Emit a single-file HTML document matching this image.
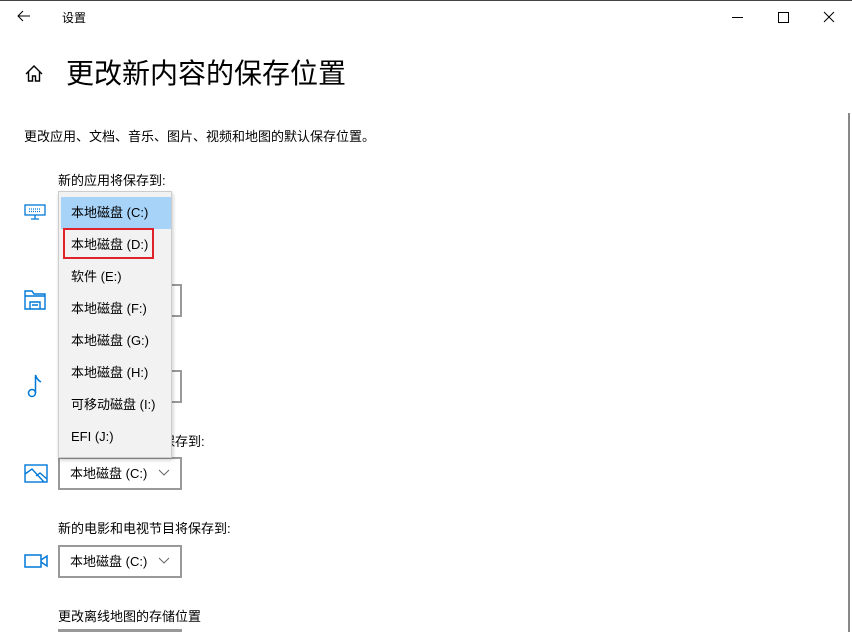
<!DOCTYPE html>
<html><head><meta charset="utf-8"><style>
body{margin:0;width:852px;height:632px;overflow:hidden;background:#fff;font-family:"Liberation Sans","Noto Sans CJK SC",sans-serif;color:#000;position:relative}
.a{position:absolute;white-space:nowrap}
.cb{position:absolute;left:58px;width:120px;height:29px;border:2px solid #999;background:#fff;font-size:13px;line-height:29px;box-sizing:content-box}
.cb span{position:absolute;left:10px}
.cb svg{position:absolute;left:98px;top:10px}
.pop{position:absolute;left:58px;top:191px;width:112px;height:265px;background:#f2f2f2;border:1px solid #ccc;box-shadow:1px 2px 4px rgba(0,0,0,.2)}
.it{position:absolute;left:2px;width:110px;height:32px;line-height:32px;font-size:13px;padding-left:10px;box-sizing:border-box}
</style></head><body>
<div class="a" style="left:0;top:0;width:852px;height:1px;background:#444"></div>
<svg class="a" style="left:17px;top:10px" width="14" height="12"><path d="M6 1L1 6L6 11M1 6H13" stroke="#000" fill="none" stroke-width="1"/></svg>
<div class="a" style="left:62px;top:9px;font-size:12px">设置</div>
<div class="a" style="left:732px;top:17px;width:11px;height:1px;background:#000"></div>
<div class="a" style="left:778px;top:12px;width:9px;height:9px;border:1px solid #000"></div>
<svg class="a" style="left:823px;top:11px" width="12" height="12"><path d="M1 1L11 11M11 1L1 11" stroke="#000"/></svg>
<svg class="a" style="left:24px;top:64px" width="20" height="20"><path d="M2 10L10 2L18 10M4.5 8V17H8.5V12H11.5V17H15.5V8" stroke="#000" fill="none" stroke-width="1.4"/></svg>
<div class="a" style="left:66px;top:55px;font-size:28px;line-height:38px">更改新内容的保存位置</div>
<div class="a" style="left:24px;top:126px;font-size:13px">更改应用、文档、音乐、图片、视频和地图的默认保存位置。</div>
<div class="a" style="left:58px;top:170px;font-size:13px">新的应用将保存到:</div>
<div class="a" style="left:58px;top:257px;font-size:13px">新的文档将保存到:</div>
<div class="a" style="left:58px;top:344px;font-size:13px">新的音乐将保存到:</div>
<div class="a" style="left:58px;top:431px;font-size:13px">新的照片和视频将保存到:</div>
<div class="a" style="left:58px;top:518px;font-size:13px">新的电影和电视节目将保存到:</div>
<div class="a" style="left:58px;top:606px;font-size:13px">更改离线地图的存储位置</div>
<div class="a" style="left:58px;top:629px;width:124px;height:3px;background:#999"></div>
<div class="a" style="left:848px;top:113px;width:2px;height:519px;background:#888"></div>
<!-- icons -->
<svg class="a" style="left:24px;top:204px" width="22" height="16" fill="none" stroke="#0078d7" stroke-width="1.3"><rect x="1" y="1" width="20" height="10"/><path d="M11 11V15M7 15H15"/><path d="M5 5h12M5 7.5h12" stroke-dasharray="1 1"/></svg>
<svg class="a" style="left:24px;top:289px" width="22" height="21" fill="none" stroke="#0078d7" stroke-width="1.4"><path d="M1 20V2H8L10 5H21V20Z M1 7H21 M6 20V13H16V20 M8 16H14"/></svg>
<svg class="a" style="left:27px;top:373px" width="16" height="26" fill="none" stroke="#0078d7" stroke-width="1.5"><circle cx="5" cy="20" r="3.5"/><path d="M8.5 20V2Q10 7 14 9"/></svg>
<svg class="a" style="left:24px;top:464px" width="24" height="19" fill="none" stroke="#0078d7" stroke-width="1.4"><rect x="1" y="1" width="22" height="17"/><path d="M1 10L8 5L20 18M12 12L16 9L23 15"/></svg>
<svg class="a" style="left:24px;top:554px" width="25" height="14" fill="none" stroke="#0078d7" stroke-width="1.5"><rect x="1" y="1" width="16" height="12"/><path d="M17 6L23 2V12L17 8"/></svg>
<!-- combos -->
<div class="cb" style="top:284px"></div>
<div class="cb" style="top:370px"></div>
<div class="cb" style="top:457px"><span>本地磁盘 (C:)</span><svg width="12" height="8"><path d="M1 1L6 6L11 1" stroke="#666" fill="none"/></svg></div>
<div class="cb" style="top:545px"><span>本地磁盘 (C:)</span><svg width="12" height="8"><path d="M1 1L6 6L11 1" stroke="#666" fill="none"/></svg></div>
<div class="pop">
<div class="it" style="top:5px;background:#a8d3f8">本地磁盘 (C:)</div>
<div class="it" style="top:37px">本地磁盘 (D:)</div>
<div class="it" style="top:69px">软件 (E:)</div>
<div class="it" style="top:101px">本地磁盘 (F:)</div>
<div class="it" style="top:133px">本地磁盘 (G:)</div>
<div class="it" style="top:165px">本地磁盘 (H:)</div>
<div class="it" style="top:197px">可移动磁盘 (I:)</div>
<div class="it" style="top:229px">EFI (J:)</div>
<div class="a" style="left:4px;top:36px;width:87px;height:27px;border:2px solid #e0222b"></div>
</div>
</body></html>
